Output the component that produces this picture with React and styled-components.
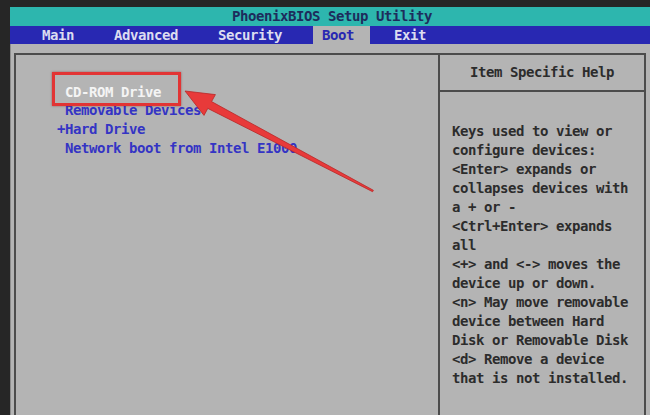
import React from 'react'
import styled, { createGlobalStyle } from 'styled-components'

const GlobalStyle = createGlobalStyle`
	html, body {
		margin: 0;
		height: 100%;
		background: #262626;
		overflow: hidden;
	}
	#root {
		height: 100%;
	}
`

const menuItems = ['Main', 'Advanced', 'Security', 'Boot', 'Exit']

const bootItems = [
	{ label: 'CD-ROM Drive', selected: true },
	{ label: 'Removable Devices' },
	{ label: 'Hard Drive', marker: '+' },
	{ label: 'Network boot from Intel E1000' },
]

const helpLines = [
	'Keys used to view or',
	'configure devices:',
	'<Enter> expands or',
	'collapses devices with',
	'a + or -',
	'<Ctrl+Enter> expands',
	'all',
	'<+> and <-> moves the',
	'device up or down.',
	'<n> May move removable',
	'device between Hard',
	'Disk or Removable Disk',
	'<d> Remove a device',
	'that is not installed.',
]

const App = () => (
	<>
		<GlobalStyle />
		<Screen>
			<TitleBar>PhoenixBIOS Setup Utility</TitleBar>
			<MenuBar>
				{menuItems.map(item => (
					<MenuTab key={item} active={item === 'Boot'}>
						{item}
					</MenuTab>
				))}
			</MenuBar>
			<Body>
				<Frame>
					<BootPane>
						<BootList>
							{bootItems.map(el => (
								<BootItem key={el.label} selected={el.selected}>
									<Marker>{el.marker || ''}</Marker>
									{el.label}
								</BootItem>
							))}
						</BootList>
						<Highlight />
						<Arrow viewBox="0 0 422 300" width="422" height="300">
							<polygon
								points="169,36 199.4,39.6 195.6,46.6 357.4,135.3 356.6,136.7 191.8,53.4 188,60.4"
								fill="#e83a3a"
								stroke="#b82828"
								strokeWidth="0.8"
								strokeLinejoin="round"
							/>
						</Arrow>
					</BootPane>
					<HelpPane>
						<HelpHeader>Item Specific Help</HelpHeader>
						<HelpText>
							{helpLines.map(line => (
								<div key={line}>{line}</div>
							))}
						</HelpText>
					</HelpPane>
				</Frame>
			</Body>
		</Screen>
	</>
)

const biosFont = `
	font-family: "DejaVu Sans Mono", "Liberation Mono", monospace;
	font-size: 14px;
	letter-spacing: -0.43px;
	font-weight: bold;
	white-space: pre;
`

const Screen = styled.div`
	display: flex;
	flex-direction: column;
	height: calc(100% - 7px);
	margin: 7px 0 0 10px;
	${biosFont}
`

const TitleBar = styled.div`
	height: 19px;
	line-height: 19px;
	text-align: center;
	padding-left: 4px;
	background: #2db6ae;
	color: #1d2c5c;
`

const MenuBar = styled.div`
	display: flex;
	gap: 15px;
	height: 18px;
	padding-left: 23px;
	background: #2828b2;
`

const MenuTab = styled.div`
	line-height: 18px;
	padding: 0 16px 0 9px;
	color: ${props => (props.active ? '#2828b2' : '#dcdcf0')};
	background: ${props => (props.active ? '#b4b4b4' : 'transparent')};
`

const Body = styled.div`
	flex: 1;
	display: flex;
	padding: 9px 4px 0 3px;
	background: #b4b4b4;
	border-left: 1px solid #8c8c8c;
`

const Frame = styled.div`
	flex: 1;
	display: flex;
	border: 2px solid #4c4c4c;
	border-bottom: none;
`

const BootPane = styled.div`
	position: relative;
	width: 422px;
	padding: 28px 0 0 41px;
	box-sizing: border-box;
`

const BootList = styled.div`
	display: flex;
	flex-direction: column;
`

const BootItem = styled.div`
	line-height: 19px;
	color: ${props => (props.selected ? '#f4f4f4' : '#3434c4')};

	&:first-child {
		line-height: 18px;
	}
`

const Marker = styled.span`
	display: inline-block;
	width: 8px;
`

const Highlight = styled.div`
	position: absolute;
	left: 36px;
	top: 17px;
	width: 123px;
	height: 28px;
	border: 3px solid #e23434;
	box-shadow: 0 0 2px rgba(120, 0, 0, 0.5);
`

const Arrow = styled.svg`
	position: absolute;
	left: 0;
	top: 0;
	overflow: visible;
`

const HelpPane = styled.div`
	flex: 1;
	display: flex;
	flex-direction: column;
	border-left: 2px solid #4c4c4c;
	color: #2c2c2c;
`

const HelpHeader = styled.div`
	height: 35px;
	line-height: 35px;
	text-align: center;
	border-bottom: 2px solid #4c4c4c;
`

const HelpText = styled.div`
	padding: 30px 0 0 12px;
	line-height: 19px;
`

export default App
